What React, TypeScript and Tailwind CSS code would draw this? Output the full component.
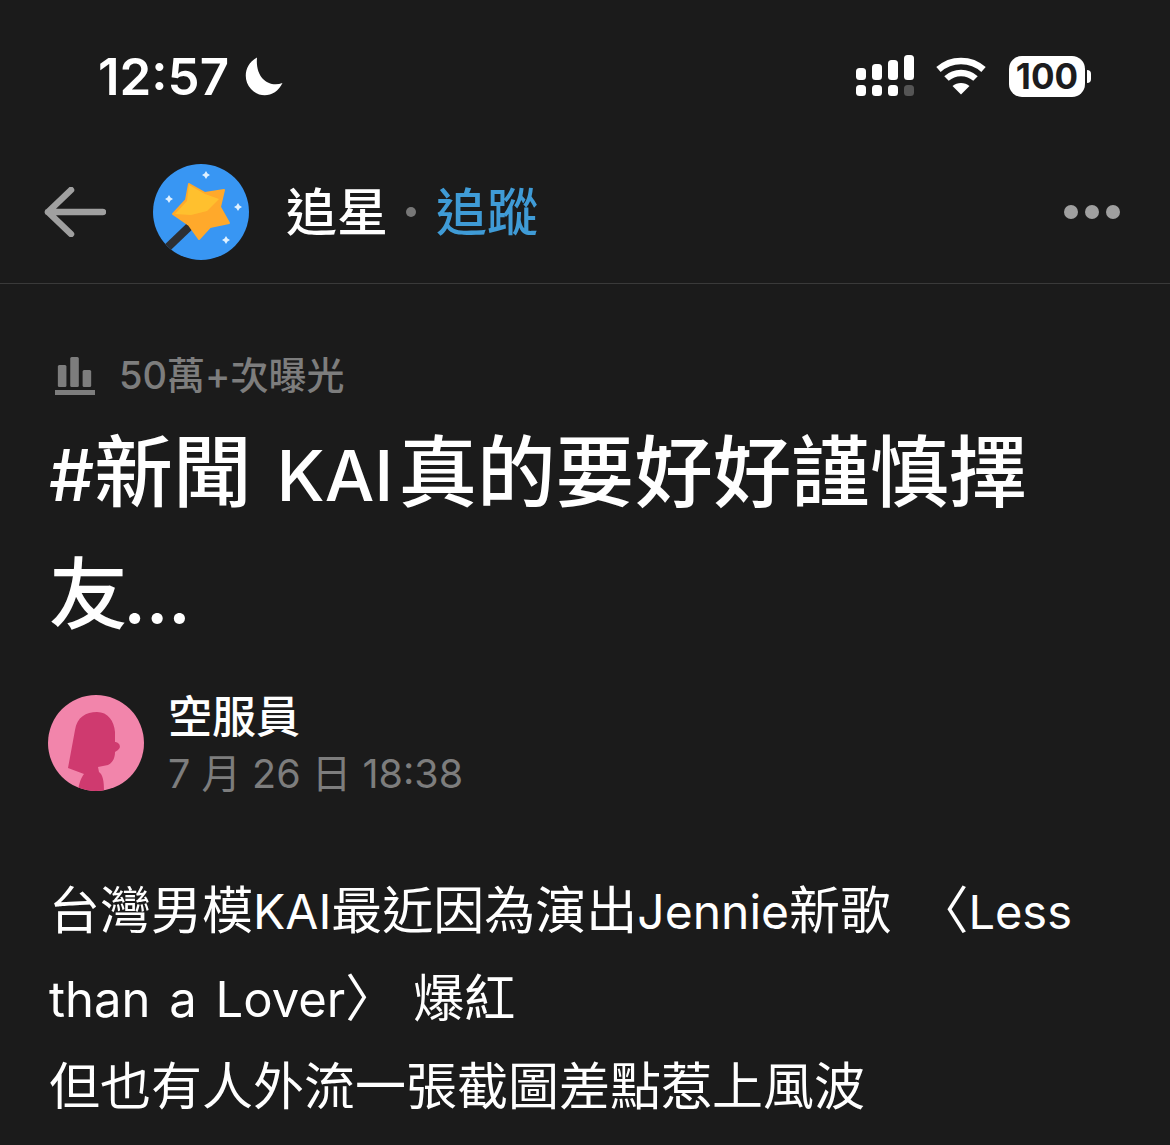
const fontStack = "font-['Inter','Noto_Sans_CJK_TC',sans-serif]";

function SignalIcon() {
  return (
    <svg width="58" height="42" viewBox="0 0 58 42" fill="#fff">
      <rect x="0" y="13" width="10" height="12" rx="3.5" />
      <rect x="16" y="9" width="10" height="16" rx="3.5" />
      <rect x="32" y="5" width="10" height="20" rx="3.5" />
      <rect x="48" y="0" width="10" height="25" rx="3.5" />
      <rect x="0" y="30" width="10" height="11" rx="3.5" />
      <rect x="16" y="30" width="10" height="11" rx="3.5" />
      <rect x="32" y="30" width="10" height="11" rx="3.5" />
      <rect x="48" y="30" width="10" height="11" rx="3.5" fill="#555" />
    </svg>
  );
}

function WifiIcon() {
  return (
    <svg width="50" height="38" viewBox="0 0 50 38" fill="none" stroke="#fff" strokeWidth="6.5">
      <path d="M2.5 12.5C15 1 35 1 47.5 12.5" />
      <path d="M10.5 21.5C18.5 14 31.5 14 39.5 21.5" />
      <path d="M25 37.5L16.5 29C21 25 29 25 33.5 29Z" fill="#fff" stroke="none" />
    </svg>
  );
}

function Battery() {
  return (
    <div className="ml-px flex items-center gap-[2px]">
      <div className="flex h-[41px] w-[76px] items-center justify-center rounded-[13px] bg-white text-[35px] font-bold leading-none text-[#1c1c1e]">
        100
      </div>
      <div className="h-[13px] w-[4px] rounded-r-full bg-white" />
    </div>
  );
}

function StarAvatar() {
  return (
    <svg width="96" height="96" viewBox="0 0 96 96" className="shrink-0">
      <defs>
        <clipPath id="c">
          <circle cx="48" cy="48" r="48" />
        </clipPath>
      </defs>
      <circle cx="48" cy="48" r="48" fill="#3896f3" />
      <g clipPath="url(#c)">
        <path d="M14 84L37 62" stroke="#2d2f33" strokeWidth="8" />
        <path d="M36 20L52 29L71 26L67 43L76 59L57 63L46 75L36 61L20 50L33 36Z" fill="#ffa92b" stroke="#ffa92b" strokeWidth="2" strokeLinejoin="round" />
        <path d="M36 21L52 30L66 35L54 47L38 51L22 50L34 37Z" fill="#ffc02e" />
      </g>
      <path d="M53 7L54.5 9.5L57 11L54.5 12.5L53 15L51.5 12.5L49 11L51.5 9.5Z" fill="#dff1ff" />
      <path d="M16 31L17.5 33.5L20 35L17.5 36.5L16 39L14.5 36.5L12 35L14.5 33.5Z" fill="#dff1ff" />
      <path d="M85 39L86.5 41.5L89 43L86.5 44.5L85 47L83.5 44.5L81 43L83.5 41.5Z" fill="#dff1ff" />
      <path d="M73 72L74.5 74.5L77 76L74.5 77.5L73 80L71.5 77.5L69 76L71.5 74.5Z" fill="#dff1ff" />
    </svg>
  );
}

function PersonAvatar() {
  return (
    <svg width="96" height="96" viewBox="0 0 96 96" className="shrink-0">
      <defs>
        <clipPath id="p">
          <circle cx="48" cy="48" r="48" />
        </clipPath>
      </defs>
      <circle cx="48" cy="48" r="48" fill="#f285ab" />
      <path
        clipPath="url(#p)"
        d="M20 73L27 35C29 22 38 17 49 17C60 17 66 26 67 37L67 47C71 47 74 52 70 55L67 57C67 64 64 68 60 70L50 72L51 77C55 80 56 86 56 96L30 96C31 88 33 83 36 79Z"
        fill="#cf3a6f"
      />
    </svg>
  );
}

export default function App() {
  return (
    <div className={`h-[1145px] w-[1170px] overflow-hidden bg-[#1b1b1b] text-white ${fontStack}`}>
      <div className="flex h-[153px] items-start justify-between pl-[98px] pr-[79px] pt-[49px]">
        <div className="flex items-center gap-[14px]">
          <span className="text-[51px] font-semibold leading-[56px]">12:57</span>
          <svg width="40" height="40" viewBox="0 0 40 40" fill="#fff">
            <path d="M14 0.5C2 7 -1 22 8 32C17 42 33 40 39.5 26C27 31 12 22 14 0.5Z" />
          </svg>
        </div>
        <div className="flex items-center gap-[22px] pt-[6px]">
          <SignalIcon />
          <WifiIcon />
          <Battery />
        </div>
      </div>

      <div className="flex h-[131px] items-center justify-between border-b border-[#3a3a3a] pb-[12px] pl-[44px] pr-[50px]">
        <div className="flex items-center">
          <svg width="62" height="50" viewBox="0 0 62 50" fill="none" stroke="#a0a0a0" strokeWidth="6.5" strokeLinecap="round" strokeLinejoin="round">
            <path d="M59 25H4M27 3L4 25L27 47" />
          </svg>
          <div className="ml-[47px]">
            <StarAvatar />
          </div>
          <span className="ml-[37px] text-[51px] font-medium leading-none">追星</span>
          <span className="ml-[18px] h-[10px] w-[10px] rounded-full bg-[#777]" />
          <span className="ml-[20px] text-[51px] font-medium leading-none text-[#3f9bd6]">追蹤</span>
        </div>
        <div className="flex gap-[7px]">
          <span className="h-[14px] w-[14px] rounded-full bg-[#a0a0a0]" />
          <span className="h-[14px] w-[14px] rounded-full bg-[#a0a0a0]" />
          <span className="h-[14px] w-[14px] rounded-full bg-[#a0a0a0]" />
        </div>
      </div>

      <div className="px-[49px] pt-[68px]">
        <div className="flex h-[46px] items-center text-[#7d7d7d]">
          <svg width="40" height="42" viewBox="0 0 42 42" fill="#7d7d7d" preserveAspectRatio="none" className="ml-[6px]">
            <rect x="3" y="11" width="9" height="22" rx="1.5" />
            <rect x="16" y="3" width="9" height="30" rx="1.5" />
            <rect x="29" y="16" width="9" height="17" rx="1.5" />
            <rect x="0" y="36" width="42" height="5" />
          </svg>
          <span className="ml-[24px] text-[38px] font-medium leading-none">50萬+次曝光</span>
        </div>

        <h1 className="mt-[14px] text-[78.6px] font-medium leading-[122px]">
          <span className="text-[71px] leading-none">#</span>新聞<span className="ml-[25px] mr-[5px] text-[70px] leading-none">KAI</span>真的要好好謹慎擇
          <br />
          友<span className="-ml-[4px] text-[70px] font-semibold leading-none">...</span>
        </h1>

        <div className="mt-[39px] flex">
          <div className="-ml-px">
            <PersonAvatar />
          </div>
          <div className="ml-[24px] flex flex-col">
            <span className="text-[44px] font-medium leading-[44px]">空服員</span>
            <span className="mt-[13px] text-[39.5px] leading-[44px] text-[#7d7d7d]">7 月 26 日 18:38</span>
          </div>
        </div>

        <div className="mt-[71px] text-[51px] leading-[88px]">
          台灣男模<span className="text-[48px] leading-none">KAI</span>最近因為演出<span className="text-[48px] leading-none">Jennie</span>新歌 <span className="ml-[12px]">〈</span><span className="text-[47px] leading-none">Less</span>
          <br />
          <span className="text-[49px] leading-none [word-spacing:5px]">than a Lover</span>〉<span className="ml-[17px]">爆紅</span>
          <br />
          但也有人外流一張截圖差點惹上風波
        </div>
      </div>
    </div>
  );
}
